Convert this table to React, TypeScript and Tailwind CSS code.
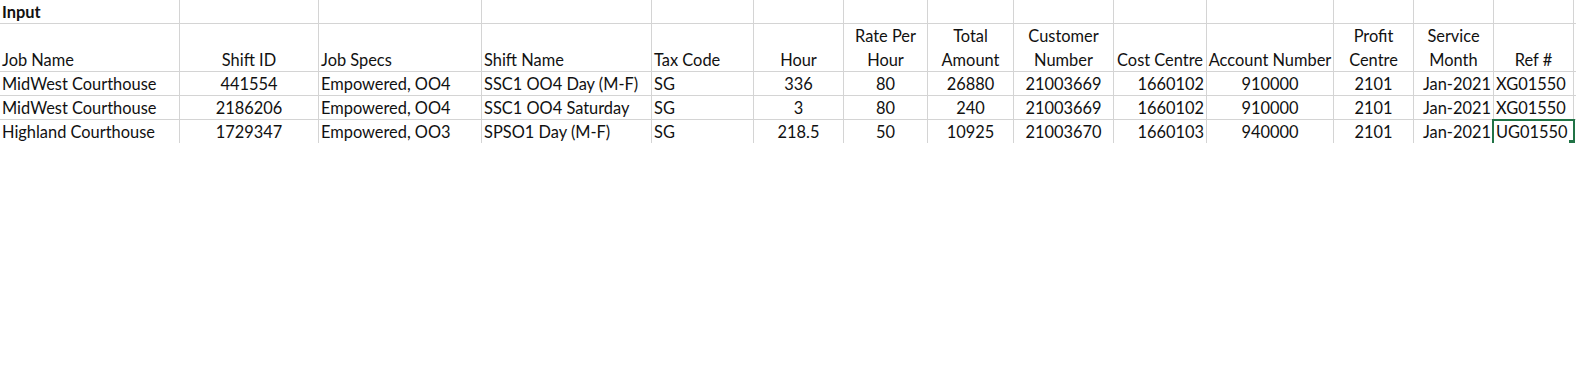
import React from 'react';

type Align = 'left' | 'center' | 'right';

const columns: { header: string[]; head: Align; body: Align }[] = [
    { header: ['Job Name'], head: 'left', body: 'left' },
    { header: ['Shift ID'], head: 'center', body: 'center' },
    { header: ['Job Specs'], head: 'left', body: 'left' },
    { header: ['Shift Name'], head: 'left', body: 'left' },
    { header: ['Tax Code'], head: 'left', body: 'left' },
    { header: ['Hour'], head: 'center', body: 'center' },
    { header: ['Rate Per', 'Hour'], head: 'center', body: 'center' },
    { header: ['Total', 'Amount'], head: 'center', body: 'center' },
    { header: ['Customer', 'Number'], head: 'center', body: 'center' },
    { header: ['Cost Centre'], head: 'center', body: 'right' },
    { header: ['Account Number'], head: 'center', body: 'center' },
    { header: ['Profit', 'Centre'], head: 'center', body: 'center' },
    { header: ['Service', 'Month'], head: 'center', body: 'right' },
    { header: ['Ref #'], head: 'center', body: 'left' },
];

const rows: string[][] = [
    ['MidWest Courthouse', '441554', 'Empowered, OO4', 'SSC1 OO4 Day (M-F)', 'SG', '336', '80', '26880', '21003669', '1660102', '910000', '2101', 'Jan-2021', 'XG01550'],
    ['MidWest Courthouse', '2186206', 'Empowered, OO4', 'SSC1 OO4 Saturday', 'SG', '3', '80', '240', '21003669', '1660102', '910000', '2101', 'Jan-2021', 'XG01550'],
    ['Highland Courthouse', '1729347', 'Empowered, OO3', 'SPSO1 Day (M-F)', 'SG', '218.5', '50', '10925', '21003670', '1660103', '940000', '2101', 'Jan-2021', 'UG01550'],
];

const alignClass: Record<Align, string> = {
    left: 'justify-start text-left',
    center: 'justify-center text-center',
    right: 'justify-end text-right',
};

function Cell({
    children,
    align = 'left',
    last = false,
    className = '',
    overlay,
}: {
    children?: React.ReactNode;
    align?: Align;
    last?: boolean;
    className?: string;
    overlay?: React.ReactNode;
}) {
    return (
        <div
            className={`relative flex items-end overflow-visible whitespace-nowrap border-r border-[#d4d4d4] px-[2px] ${
                last ? '' : 'border-b'
            } ${alignClass[align]} ${className}`}
        >
            <div className="relative top-[1px]">{children}</div>
            {overlay}
        </div>
    );
}

export default function App() {
    return (
        <div className="h-[372px] w-[1576px] overflow-hidden bg-white font-['Lato',sans-serif] text-[16.4px] leading-[24px] text-[#111]">
            <div className="grid grid-cols-[180px_139px_163px_170px_102px_90px_84px_86px_100px_93px_127px_80px_80px_80px_1fr] grid-rows-[24px_48px_24px_24px_23px]">
                {/* row 1 */}
                <Cell className="font-bold">Input</Cell>
                {columns.slice(1).map((_, i) => (
                    <Cell key={`r1-${i}`} />
                ))}
                <div className="border-b border-[#d4d4d4]" />

                {/* header row */}
                {columns.map((c, i) => (
                    <Cell key={`h-${i}`} align={c.head}>
                        {c.header.map((line) => (
                            <div key={line}>{line}</div>
                        ))}
                    </Cell>
                ))}
                <div className="border-b border-[#d4d4d4]" />

                {/* data rows */}
                {rows.map((row, r) => {
                    const lastRow = r === rows.length - 1;
                    return (
                        <React.Fragment key={r}>
                            {row.map((v, i) => (
                                <Cell
                                    key={i}
                                    align={columns[i].body}
                                    last={lastRow}
                                    overlay={
                                        lastRow && i === row.length - 1 ? (
                                            <>
                                                <div className="pointer-events-none absolute -left-[2px] -right-[2px] -top-[1px] bottom-0 border-2 border-b-0 border-[#217346]" />
                                                <div className="absolute -right-[2px] bottom-0 h-[3px] w-[6px] bg-[#217346]" />
                                            </>
                                        ) : null
                                    }
                                >
                                    {v}
                                </Cell>
                            ))}
                            <div className={lastRow ? '' : 'border-b border-[#d4d4d4]'} />
                        </React.Fragment>
                    );
                })}
            </div>
        </div>
    );
}
